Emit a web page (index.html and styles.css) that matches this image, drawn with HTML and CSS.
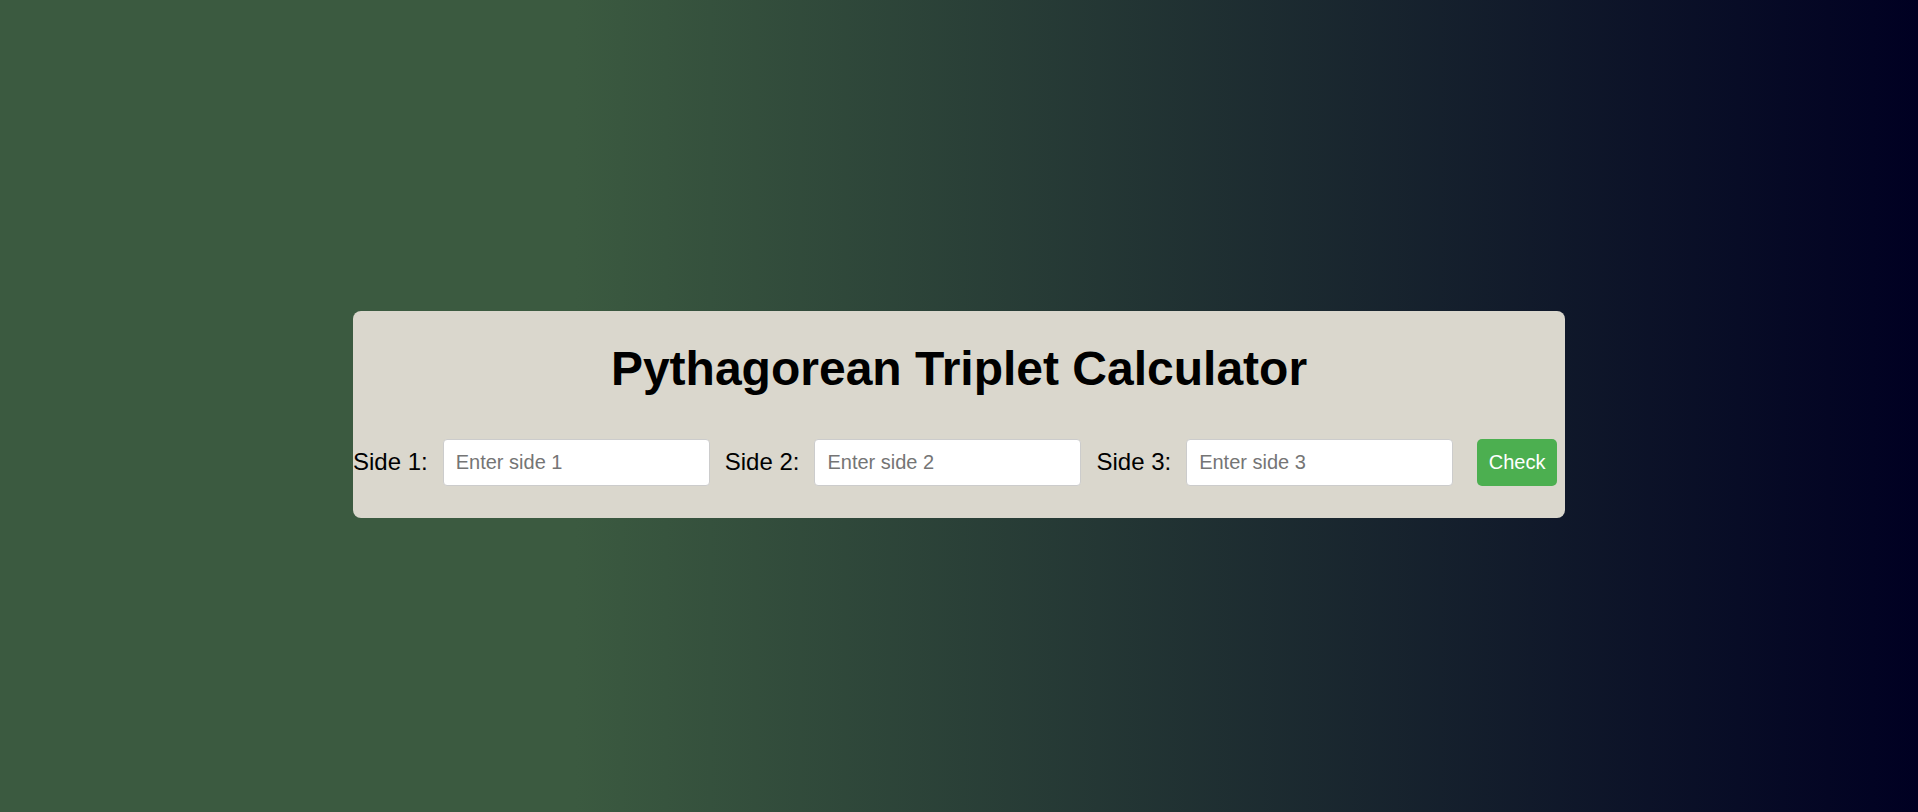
FILE: index.html
```html
<!DOCTYPE html>
<html lang="en">
<head>
<meta charset="utf-8">
<title>Pythagorean Triplet Calculator</title>
<link rel="stylesheet" href="styles.css">
</head>
<body>
  <div class="card">
    <h1 class="title">Pythagorean Triplet Calculator</h1>
    <form class="row" onsubmit="return false;">
      <label class="label" for="s1">Side 1:</label>
      <input class="field" id="s1" type="number" placeholder="Enter side 1">
      <label class="label" for="s2">Side 2:</label>
      <input class="field" id="s2" type="number" placeholder="Enter side 2">
      <label class="label" for="s3">Side 3:</label>
      <input class="field last" id="s3" type="number" placeholder="Enter side 3">
      <button class="btn" type="submit">Check</button>
    </form>
  </div>
</body>
</html>
```

FILE: styles.css
```css
html, body {
  height: 100%;
}
body {
  margin: 8px;
  height: 100vh;
  display: flex;
  align-items: center;
  justify-content: center;
  font-family: "Liberation Sans", Arial, sans-serif;
  background: linear-gradient(to right, #3b5a40 30%, #000022 100%);
  background-attachment: fixed;
}
.card {
  box-sizing: border-box;
  width: 1212px;
  height: 207px;
  padding: 30px 0 32px;
  background: #dad7cd;
  border-radius: 8px;
}
.title {
  margin: 0 0 43px;
  font-size: 48px;
  line-height: 55px;
  font-weight: bold;
  text-align: center;
  color: #000;
}
.row {
  display: flex;
  align-items: center;
  margin: 0;
}
.label {
  font-size: 24px;
  color: #000;
  margin-right: 15px;
  white-space: nowrap;
}
.field {
  box-sizing: border-box;
  width: 267px;
  height: 47px;
  padding: 0 12px;
  margin-right: 15px;
  border: 1px solid #ccc;
  border-radius: 4px;
  background: #fff;
  font-family: "Liberation Sans", Arial, sans-serif;
  font-size: 20px;
  color: #000;
  -moz-appearance: textfield;
}
.field::-webkit-outer-spin-button,
.field::-webkit-inner-spin-button {
  -webkit-appearance: none;
  margin: 0;
}
.field::placeholder {
  color: #757575;
}
.field.last {
  margin-right: 24px;
}
.btn {
  box-sizing: border-box;
  width: 80px;
  height: 47px;
  padding: 0;
  border: none;
  border-radius: 5px;
  background: #4caf50;
  color: #fff;
  font-family: "Liberation Sans", Arial, sans-serif;
  font-size: 20px;
  cursor: pointer;
}
```
